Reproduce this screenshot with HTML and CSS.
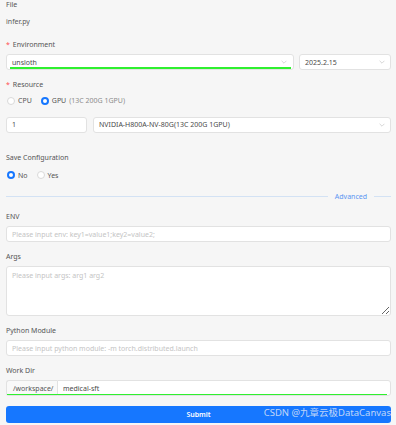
FILE: index.html
```html
<!DOCTYPE html>
<html lang="en">
<head>
    <meta charset="UTF-8">
    <meta name="viewport" content="width=device-width, initial-scale=1.0">
    <title>Job</title>
    <link rel="stylesheet" href="styles.css">
</head>
<body>

    <form class="job-form">

        <div class="field field-file">
            <div class="label">File</div>
            <div class="file-name">infer.py</div>
        </div>

        <div class="field">
            <div class="label"><span class="req">*</span>Environment</div>
            <div class="row">
                <div class="select env-select">
                    <span>unsloth</span>
                    <svg class="chevron" viewBox="0 0 10 6"><path d="M1 1l4 4 4-4" /></svg>
                    <div class="mark"></div>
                </div>
                <div class="select version-select">
                    <span>2025.2.15</span>
                    <svg class="chevron" viewBox="0 0 10 6"><path d="M1 1l4 4 4-4" /></svg>
                </div>
            </div>
        </div>

        <div class="field field-resource">
            <div class="label"><span class="req">*</span>Resource</div>
            <div class="radios">
                <label class="radio"><span class="dot"></span>CPU</label>
                <label class="radio"><span class="dot checked"></span>GPU <span class="muted">(13C 200G 1GPU)</span></label>
            </div>
            <div class="row row-gpu">
                <input type="text" class="input count-input" value="1">
                <div class="select gpu-select">
                    <span>NVIDIA-H800A-NV-80G(13C 200G 1GPU)</span>
                    <svg class="chevron" viewBox="0 0 10 6"><path d="M1 1l4 4 4-4" /></svg>
                </div>
            </div>
        </div>

        <div class="field field-save">
            <div class="label">Save Configuration</div>
            <div class="radios">
                <label class="radio"><span class="dot checked"></span>No</label>
                <label class="radio"><span class="dot"></span>Yes</label>
            </div>
        </div>

        <div class="divider">
            <span class="line"></span>
            <span class="divider-text">Advanced</span>
            <span class="line line-short"></span>
        </div>

        <div class="field">
            <div class="label">ENV</div>
            <input type="text" class="input" placeholder="Please input env: key1=value1;key2=value2;">
        </div>

        <div class="field">
            <div class="label">Args</div>
            <textarea class="input textarea" placeholder="Please input args: arg1 arg2"></textarea>
        </div>

        <div class="field">
            <div class="label">Python Module</div>
            <input type="text" class="input" placeholder="Please input python module: -m torch.distributed.launch">
        </div>

        <div class="field">
            <div class="label">Work Dir</div>
            <div class="group">
                <span class="addon">/workspace/</span>
                <input type="text" class="input group-input" value="medical-sft">
                <div class="mark mark-dir"></div>
            </div>
        </div>

        <div class="submit-wrap">
            <button type="button" class="submit">Submit</button>
            <span class="watermark">CSDN @九章云极DataCanvas</span>
        </div>

    </form>

</body>
</html>
```

FILE: styles.css
```css
* {
    box-sizing: border-box;
}

:root {
    --bg: #f6f6f6;
    --border: #e2e2e2;
    --text: #4a4a4a;
    --muted: #8c8c8c;
    --holder: #c4c4c4;
    --blue: #1677ff;
    --mark: #2ff02f;
}

body {
    background-color: var(--bg);
    margin: 0;
    padding: 0 5px 0 6px;
    font-family: 'Noto Sans', 'Noto Sans CJK SC', sans-serif;
    font-size: 7px;
    color: var(--text);
}

.job-form {
    display: flex;
    flex-direction: column;
}

.label {
    height: 10px;
    line-height: 10px;
    margin-bottom: 4.5px;
    color: #555;
}

.req {
    color: #ff4d4f;
    margin-right: 3px;
}

.field {
    margin-bottom: 9.5px;
}

.field-file {
    margin-bottom: 12.5px;
}

.field-file .label {
    margin-bottom: 7px;
}

.file-name {
    height: 10px;
    line-height: 10px;
    color: #5a5a5a;
}

.field-resource {
    margin-bottom: 20px;
}

.row {
    display: flex;
    gap: 5px;
}

.row-gpu {
    gap: 6px;
}

.select,
.input {
    position: relative;
    height: 16px;
    background: #fff;
    border: 1px solid var(--border);
    border-radius: 3px;
    font-family: inherit;
    font-size: 7px;
    color: var(--text);
    padding: 0 5px;
    outline: 0;
}

.input {
    display: block;
    width: 100%;
}

.input::placeholder {
    color: var(--holder);
}

.select {
    display: flex;
    align-items: center;
    justify-content: space-between;
}

.chevron {
    width: 6px;
    height: 4px;
    fill: none;
    stroke: #bdbdbd;
    stroke-width: 1;
}

.env-select {
    flex: 1;
    padding-right: 6px;
}

.version-select {
    width: 92px;
}

.count-input {
    width: 81px;
}

.gpu-select {
    flex: 1;
}

.mark {
    position: absolute;
    left: 3px;
    right: 2px;
    bottom: 0.5px;
    height: 1.5px;
    background: var(--mark);
}

.radios {
    display: flex;
    align-items: center;
    gap: 9px;
    height: 10px;
    margin: 6px 0 11px 1px;
}

.field-save .radios {
    margin: 7.5px 0 0 1px;
}

.radio {
    display: flex;
    align-items: center;
    gap: 3px;
    color: #555;
}

.muted {
    color: var(--muted);
}

.dot {
    width: 8px;
    height: 8px;
    border-radius: 50%;
    border: 1px solid #d9d9d9;
    background: #fff;
}

.dot.checked {
    border: 2.5px solid var(--blue);
}

.divider {
    display: flex;
    align-items: center;
    gap: 7px;
    height: 10px;
    margin: 2px 0 10px;
}

.line {
    flex: 1;
    height: 1.5px;
    background: #d3e2f4;
}

.line-short {
    flex: 0 0 17px;
}

.divider-text {
    color: #5a95f2;
}

.textarea {
    height: 50px;
    padding-top: 4px;
    resize: vertical;
}

.group {
    position: relative;
    display: flex;
    height: 16px;
}

.addon {
    display: flex;
    align-items: center;
    width: 51px;
    padding-left: 6px;
    background: #f9f9f9;
    border: 1px solid var(--border);
    border-right: 0;
    border-radius: 3px 0 0 3px;
    color: #555;
}

.group-input {
    flex: 1;
    border-radius: 0 3px 3px 0;
}

.mark-dir {
    left: 1px;
    right: 4px;
    bottom: 1px;
}

.submit-wrap {
    position: relative;
}

.submit {
    display: block;
    width: 100%;
    height: 17px;
    background: var(--blue);
    color: #fff;
    border: 0;
    border-radius: 3px;
    font-family: inherit;
    font-size: 7px;
    font-weight: 600;
}

.watermark {
    position: absolute;
    right: 0;
    top: 0;
    line-height: 13px;
    font-size: 9.5px;
    color: rgba(225, 232, 245, 0.85);
    white-space: nowrap;
}
```
